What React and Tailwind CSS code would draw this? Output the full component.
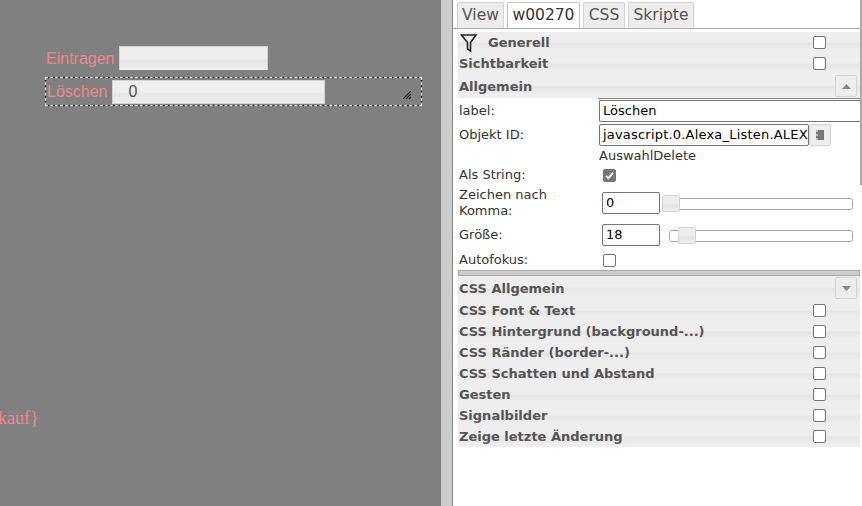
import React from 'react';

const font = { fontFamily: '"DejaVu Sans", Verdana, sans-serif' };

const Check = ({ checked }) => (
    <span className={`w-[13px] h-[13px] rounded-[2px] border border-[#767676] flex items-center justify-center shrink-0 ${checked ? 'bg-[#767676]' : 'bg-white'}`}>
        {checked && (
            <svg width="11" height="11" viewBox="0 0 11 11">
                <path d="M2 5.8 L4.4 8.2 L9 2.8" fill="none" stroke="#fff" strokeWidth="1.8" />
            </svg>
        )}
    </span>
);

const Band = ({ title, check, children, h = 'h-[21px]', indent = 'pl-px' }) => (
    <div className={`${h} flex items-center relative bg-[linear-gradient(#eeeeee_0%,#eeeeee_45%,#e5e5e5_55%,#eeeeee_85%)] ${indent} text-[13px] font-bold text-[#555555]`}>
        {children}
        <span className="whitespace-nowrap">{title}</span>
        {check && (
            <span className="absolute left-[355px] top-[4px]">
                <Check />
            </span>
        )}
    </div>
);

const Toggle = ({ up, className }) => (
    <span className={`absolute w-[22px] h-[22px] border border-[#d3d3d3] bg-[#ededed] rounded-[2px] flex items-center justify-center ${className}`}>
        <svg width="9" height="5" viewBox="0 0 9 5">
            <path d={up ? 'M0 5 L4.5 0 L9 5 Z' : 'M0 0 L4.5 5 L9 0 Z'} fill="#888888" />
        </svg>
    </span>
);

const Tab = ({ active, children, className }) => (
    <div className={`h-[26px] flex items-center justify-center border border-b-0 rounded-t-[2px] text-[15.5px] leading-none ${active ? 'bg-white border-[#c5c5c5] text-[#333333]' : 'bg-[#ededed] border-[#d3d3d3] text-[#555555]'} ${className}`}>
        {children}
    </div>
);

const Slider = ({ thumb, trackLeft }) => (
    <div className="relative h-[12px] flex-1 mr-[7px]">
        <div className="absolute top-[1px] right-0 h-[12px] border border-[#aaaaaa] rounded-[3px] bg-white" style={{ left: trackLeft }} />
        <div className="absolute top-[-2px] w-[18px] h-[17px] border border-[#d3d3d3] rounded-[2px] bg-[linear-gradient(#eeeeee_50%,#e3e3e3_60%,#eeeeee)]" style={{ left: thumb }} />
    </div>
);

const Field = ({ children, className }) => (
    <div className={`h-[22px] border border-[#767676] rounded-[2px] bg-white flex items-center px-[3px] text-[13px] text-black overflow-hidden whitespace-nowrap ${className}`}>
        {children}
    </div>
);

const Row = ({ label, children, className = 'h-[24px]' }) => (
    <div className={`flex items-center ${className}`}>
        <div className="w-[141px] pl-px shrink-0 text-[13px] leading-[16px] text-[#333333]">{label}</div>
        {children}
    </div>
);

export default function App() {
    return (
        <div className="w-[862px] h-[506px] flex overflow-hidden bg-white relative" style={font}>
            {/* Canvas with the widgets */}
            <div className="w-[441px] relative bg-[#808080] shrink-0" style={{ fontFamily: '"Liberation Sans", Arial, sans-serif' }}>
                <div className="absolute left-[46px] top-[46px] flex items-center">
                    <span className="text-[16px] text-[#ee8888] mr-[4px] relative top-px">Eintragen</span>
                    <div className="w-[149px] h-[24px] border border-[#d3d3d3] border-b-0 bg-[linear-gradient(#eeeeee_50%,#e5e5e5_60%,#eeeeee)]" />
                </div>
                <div className="absolute left-[45px] top-[77px] w-[377px] h-[29px] border border-black flex items-center">
                    <span className="text-[16px] text-[#ee8888] ml-px mr-[4px]">Löschen</span>
                    <div className="w-[213px] h-[24px] border border-[#d3d3d3] bg-[linear-gradient(#eeeeee_50%,#e5e5e5_60%,#eeeeee)] pl-[16px] flex items-center text-[16px] text-[#555555]">0</div>
                    <svg className="absolute right-[10px] bottom-[6px]" width="8" height="8" viewBox="0 0 8 8">
                        <path d="M0 8 L8 0 M3 8 L8 3 M6 8 L8 6" stroke="#222222" strokeWidth="1.2" />
                    </svg>
                    {/* selection frame, white dashes over the black line */}
                    <div className="absolute -inset-px border border-dashed border-white pointer-events-none" />
                </div>
                <span className="absolute left-0 top-[405px] text-[18px] text-[#ee8888] whitespace-nowrap" style={{ fontFamily: '"Liberation Serif", serif', marginLeft: -2 }}>kauf{'}'}</span>
            </div>

            {/* Splitter */}
            <div className="w-[12px] shrink-0 bg-[#cccccc] border-r border-[#888888]" />

            {/* Attribute panel */}
            <div className="flex-1 min-w-0 flex flex-col">
                <div className="h-[29px] pt-[2px] pl-[4px] flex gap-[3px] border-b border-[#aaaaaa]">
                    <Tab className="w-[47px]">View</Tab>
                    <Tab active className="w-[73px]">w00270</Tab>
                    <Tab className="w-[42px]">CSS</Tab>
                    <Tab className="w-[66px]">Skripte</Tab>
                </div>

                <div className="mt-[3px] ml-[5px] mr-[2px] relative">
                    <Band title="Generell" check indent="pl-[2px] gap-[10px]">
                        <svg width="18" height="20" viewBox="0 0 18 20">
                            <path d="M1.5 2 H16 L10.5 9.5 V18 L7.5 16 V9.5 Z" fill="none" stroke="#222222" strokeWidth="1.6" />
                        </svg>
                    </Band>
                    <Band title="Sichtbarkeit" check />
                    <Band title="Allgemein" h="h-[24px] pt-[2px]">
                        <Toggle up className="right-[3px] top-[1px]" />
                    </Band>

                    <div className="border-t border-[#888888] ml-[140px] -mr-px" />

                    <div>
                        <Row label="label:">
                            <Field className="flex-1 -mr-[3px] rounded-r-none border-r-0">Löschen</Field>
                        </Row>
                        <Row label="Objekt ID:">
                            <Field className="w-[210px] tracking-[0.2px]">javascript.0.Alexa_Listen.ALEXA_Delete</Field>
                            <span className="w-[22px] h-[22px] border border-[#d3d3d3] bg-[#ededed] rounded-[2px] flex items-center justify-center">
                                <span className="w-[8px] h-[10px] bg-[#777777] border-l-2 border-dotted border-[#bbbbbb]" />
                            </span>
                        </Row>
                        <div className="h-[17px] pl-[141px] text-[13px] leading-[18px] text-[#333333]">AuswahlDelete</div>
                        <Row label="Als String:" className="h-[22px]">
                            <span className="ml-[4px]"><Check checked /></span>
                        </Row>
                        <Row label={<>Zeichen nach<br />Komma:</>} className="h-[33px]">
                            <Field className="w-[58px] ml-[3px] shrink-0">0</Field>
                            <Slider thumb={2} trackLeft={3} />
                        </Row>
                        <Row label="Größe:" className="h-[32px]">
                            <Field className="w-[58px] ml-[3px] shrink-0">18</Field>
                            <Slider thumb={18} trackLeft={9} />
                        </Row>
                        <Row label="Autofokus:" className="h-[18px]">
                            <span className="ml-[4px]"><Check /></span>
                        </Row>
                    </div>

                    <div className="h-[6px] mt-px bg-[#cccccc] border border-[#aaaaaa]" />

                    <Band title="CSS Allgemein" h="h-[24px] pt-[2px]">
                        <Toggle className="right-[3px] top-[1px]" />
                    </Band>
                    <Band title="CSS Font & Text" check />
                    <Band title="CSS Hintergrund (background-...)" check />
                    <Band title="CSS Ränder (border-...)" check />
                    <Band title="CSS Schatten und Abstand" check />
                    <Band title="Gesten" check />
                    <Band title="Signalbilder" check />
                    <Band title="Zeige letzte Änderung" check />
                </div>
            </div>

            {/* right edge line of the upper panel part */}
            <div className="absolute right-0 top-0 w-[2px] h-[185px] bg-[#aaaaaa]" />
        </div>
    );
}
